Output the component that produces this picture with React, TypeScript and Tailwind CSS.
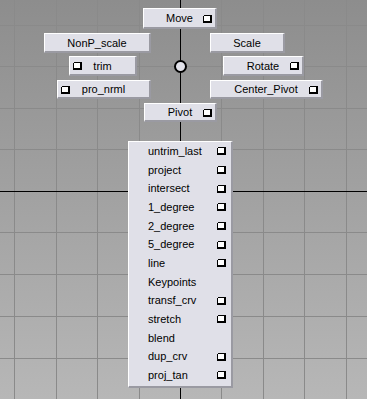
import type { ReactNode } from 'react'

const gridX = [14, 56, 97, 139, 221, 263, 304, 346]
const gridY = [25, 66, 108, 149, 232, 274, 316, 358]

type Side = 'left' | 'right' | null

const radialItems: { label: string; icon: Side; pos: string }[] = [
  { label: 'Move', icon: 'right', pos: 'left-[143px] top-[8px] w-[74px] h-[21px]' },
  { label: 'NonP_scale', icon: null, pos: 'left-[44px] top-[33px] w-[107px] h-[20px]' },
  { label: 'Scale', icon: null, pos: 'left-[210px] top-[33px] w-[75px] h-[20px]' },
  { label: 'trim', icon: 'left', pos: 'left-[69px] top-[56px] w-[68px] h-[20px]' },
  { label: 'Rotate', icon: 'right', pos: 'left-[223px] top-[56px] w-[81px] h-[20px]' },
  { label: 'pro_nrml', icon: 'left', pos: 'left-[57px] top-[80px] w-[94px] h-[19px]' },
  { label: 'Center_Pivot', icon: 'right', pos: 'left-[210px] top-[80px] w-[113px] h-[19px]' },
  { label: 'Pivot', icon: 'right', pos: 'left-[144px] top-[103px] w-[73px] h-[19px]' },
]

const listItems: { label: string; box: boolean }[] = [
  { label: 'untrim_last', box: true },
  { label: 'project', box: true },
  { label: 'intersect', box: true },
  { label: '1_degree', box: true },
  { label: '2_degree', box: true },
  { label: '5_degree', box: true },
  { label: 'line', box: true },
  { label: 'Keypoints', box: false },
  { label: 'transf_crv', box: true },
  { label: 'stretch', box: true },
  { label: 'blend', box: false },
  { label: 'dup_crv', box: true },
  { label: 'proj_tan', box: true },
]

// little maya "option box" square with drop shadow
function OptionBox() {
  return (
    <svg width="9" height="8" viewBox="0 0 9 8" shapeRendering="crispEdges" className="block">
      <path d="M1 0H9V8H0V1H1Z" fill="#000" />
      <path d="M1 1H7V6H1Z" fill="#fff" />
    </svg>
  )
}

function Viewport() {
  return (
    <svg width="367" height="399" className="absolute inset-0" shapeRendering="crispEdges">
      {gridX.map((x) => (
        <rect key={'x' + x} x={x} y={0} width={1} height={399} fill="#8a8a8a" />
      ))}
      {gridY.map((y) => (
        <rect key={'y' + y} x={0} y={y} width={367} height={1} fill="#8a8a8a" />
      ))}
      <rect x={0} y={191} width={367} height={1} fill="#000" />
      <rect x={180} y={0} width={1} height={399} fill="#000" />
      <circle cx={180.5} cy={66.5} r={5.5} fill="#e2e2ea" stroke="#000" strokeWidth={2} shapeRendering="auto" />
    </svg>
  )
}

function RadialButton({ label, icon, pos }: { label: string; icon: Side; pos: string }) {
  return (
    <div
      className={`absolute ${pos} grid grid-cols-[12px_1fr_12px] items-center px-[3px] pt-[1px] bg-[#e0e0e8] border-t border-l border-white border-b-2 border-r-2 border-b-[#9a9aa2] border-r-[#9a9aa2]`}
    >
      <span className="justify-self-start">{icon === 'left' && <OptionBox />}</span>
      <span className="text-center whitespace-nowrap leading-none">{label}</span>
      <span className="justify-self-end">{icon === 'right' && <OptionBox />}</span>
    </div>
  )
}

function Frame({ children }: { children: ReactNode }) {
  return (
    <div
      className="relative w-[367px] h-[399px] overflow-hidden bg-[linear-gradient(to_bottom,#8d8d8d,#b7b7b7)] text-[11px] text-black"
      style={{ fontFamily: '"Liberation Sans", Arial, sans-serif' }}
    >
      {children}
    </div>
  )
}

export default function App() {
  return (
    <Frame>
      <Viewport />
      {radialItems.map((item) => (
        <RadialButton key={item.label} {...item} />
      ))}
      <div className="absolute left-[128px] top-[141px] w-[105px] h-[247px] flex flex-col bg-[#e0e0e8] border-t border-l border-white border-b-2 border-r-2 border-b-[#9a9aa2] border-r-[#9a9aa2]">
        {listItems.map((item) => (
          <div key={item.label} className="h-[18.67px] flex items-center justify-between pl-[19px] pr-[5px]">
            <span className="whitespace-nowrap">{item.label}</span>
            {item.box && <OptionBox />}
          </div>
        ))}
      </div>
    </Frame>
  )
}
